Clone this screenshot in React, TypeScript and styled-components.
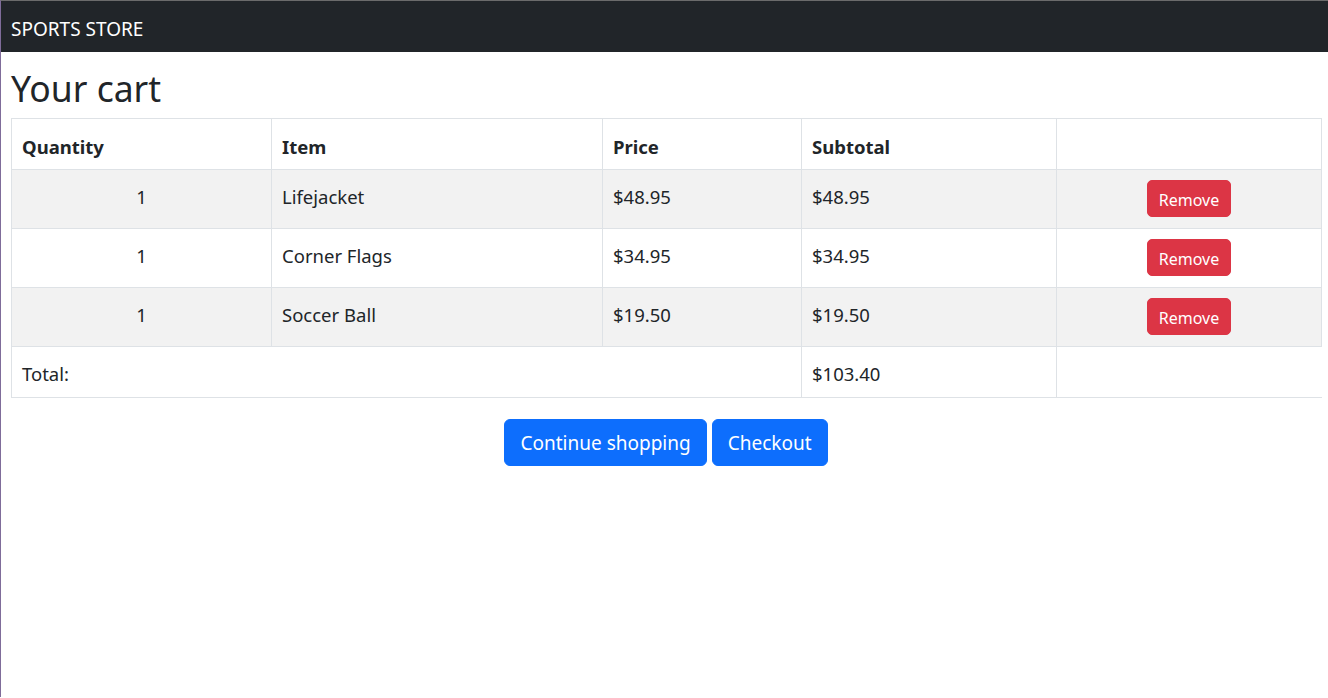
import styled, { createGlobalStyle } from "styled-components";

const GlobalStyle = createGlobalStyle`
  html, body {
    margin: 0;
    padding: 0;
    background: #ffffff;
  }
  body {
    font-family: "Noto Sans", "Open Sans", sans-serif;
    color: #212529;
    border-top: 1px solid #6b6b6b;
    border-left: 1px solid #7f6c9a;
    min-height: 697px;
    box-sizing: border-box;
  }
`;

const Navbar = styled.nav`
  height: 51px;
  background: #212529;
  display: flex;
  align-items: center;
  padding: 4px 10px 0;
  box-sizing: border-box;
`;

const Brand = styled.span`
  color: #ffffff;
  font-size: 19px;
  line-height: 24px;
`;

const Main = styled.main`
  padding: 0 7px 0 10px;
`;

const Heading = styled.h2`
  margin: 13px 0 6px;
  font-size: 35.5px;
  font-weight: 400;
  line-height: 47px;
`;

const Table = styled.table`
  width: 1310px;
  border-collapse: collapse;
  table-layout: fixed;
  font-size: 18.5px;
  line-height: 24px;
`;

const Cell = styled.td<{ $center?: boolean; $open?: boolean }>`
  border: 1px solid #dee2e6;
  padding: 0 10px 4px;
  vertical-align: middle;
  text-align: ${(p) => (p.$center ? "center" : "left")};
  ${(p) => (p.$open ? "border-right-color: transparent;" : "")}
`;

const FootCell = styled(Cell)`
  padding: 3px 10px 0;
`;

const HeadCell = styled.th`
  border: 1px solid #dee2e6;
  padding: 5px 10px 0;
  text-align: left;
  font-weight: 700;
  vertical-align: middle;
`;

const HeadRow = styled.tr`
  height: 51px;
`;

const BodyRow = styled.tr<{ $striped: boolean }>`
  height: 59px;
  background: ${(p) => (p.$striped ? "#f2f2f2" : "#ffffff")};
`;

const FootRow = styled.tr`
  height: 51px;
`;

const RemoveButton = styled.button`
  font-family: inherit;
  font-size: 16px;
  line-height: 24px;
  color: #ffffff;
  background: #dc3545;
  border: 1px solid #dc3545;
  border-radius: 5px;
  padding: 7px 11px 4px;
  margin-top: 3px;
  cursor: pointer;
`;

const Actions = styled.div`
  display: flex;
  justify-content: center;
  gap: 5px;
  margin-top: 21px;
`;

const LargeButton = styled.button`
  font-family: inherit;
  font-size: 19px;
  line-height: 29px;
  color: #ffffff;
  background: #0d6efd;
  border: 1px solid #0d6efd;
  border-radius: 6px;
  padding: 9px 15px 7px;
  cursor: pointer;
`;

const lines = [
  { id: 1, quantity: 1, name: "Lifejacket", price: 48.95 },
  { id: 2, quantity: 1, name: "Corner Flags", price: 34.95 },
  { id: 3, quantity: 1, name: "Soccer Ball", price: 19.5 },
];

const money = (v: number) => `$${v.toFixed(2)}`;

export default function App() {
  const total = lines.reduce((sum, l) => sum + l.quantity * l.price, 0);

  return (
    <>
      <GlobalStyle />
      <Navbar>
        <Brand>SPORTS STORE</Brand>
      </Navbar>
      <Main>
        <Heading>Your cart</Heading>
        <Table>
          <colgroup>
            <col style={{ width: 260 }} />
            <col style={{ width: 331 }} />
            <col style={{ width: 199 }} />
            <col style={{ width: 255 }} />
            <col style={{ width: 265 }} />
          </colgroup>
          <thead>
            <HeadRow>
              <HeadCell>Quantity</HeadCell>
              <HeadCell>Item</HeadCell>
              <HeadCell>Price</HeadCell>
              <HeadCell>Subtotal</HeadCell>
              <HeadCell />
            </HeadRow>
          </thead>
          <tbody>
            {lines.map((line, i) => (
              <BodyRow key={line.id} $striped={i % 2 === 0}>
                <Cell $center>{line.quantity}</Cell>
                <Cell>{line.name}</Cell>
                <Cell>{money(line.price)}</Cell>
                <Cell>{money(line.quantity * line.price)}</Cell>
                <Cell $center>
                  <RemoveButton>Remove</RemoveButton>
                </Cell>
              </BodyRow>
            ))}
          </tbody>
          <tfoot>
            <FootRow>
              <FootCell colSpan={3}>Total:</FootCell>
              <FootCell>{money(total)}</FootCell>
              <FootCell $open />
            </FootRow>
          </tfoot>
        </Table>
        <Actions>
          <LargeButton>Continue shopping</LargeButton>
          <LargeButton>Checkout</LargeButton>
        </Actions>
      </Main>
    </>
  );
}
